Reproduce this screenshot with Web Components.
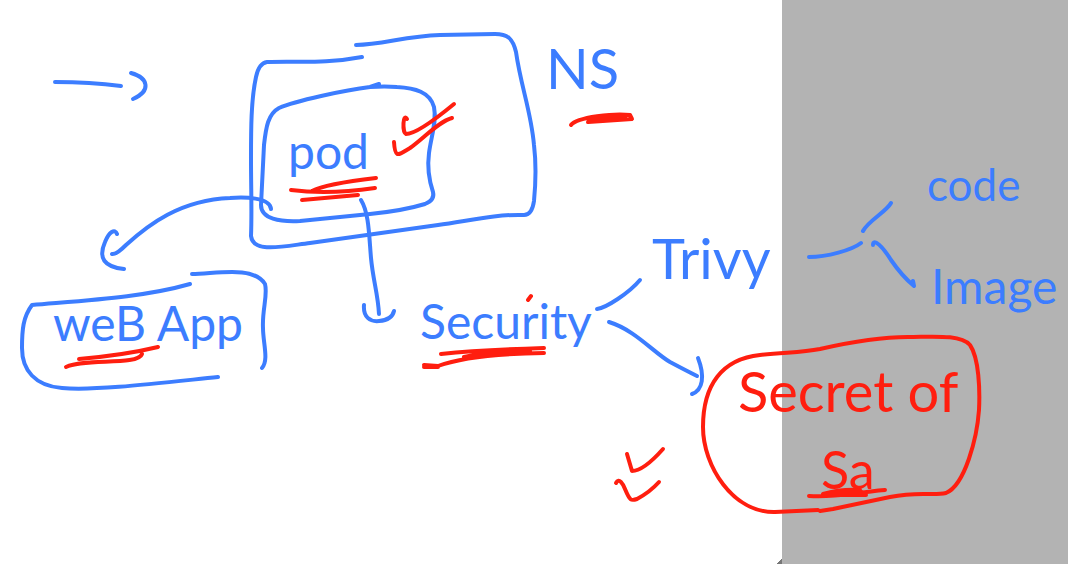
<!DOCTYPE html>
<html lang="en">
<head>
<meta charset="utf-8">
<title>Pod security whiteboard</title>
<style>
  html, body { margin: 0; height: 100%; }
  body { font-family: Lato, "Open Sans", sans-serif; }
</style>
</head>
<body>
<ink-board>
  <ink-strokes slot="ink"></ink-strokes>
  <ink-label style="left:288px;top:127px" size="48">pod</ink-label>
  <ink-label style="left:546px;top:40px" size="56">NS</ink-label>
  <ink-label style="left:53px;top:299px" size="48">weB App</ink-label>
  <ink-label style="left:420px;top:297px" size="48">Security</ink-label>
  <ink-label style="left:652px;top:230px" size="56">Trivy</ink-label>
  <ink-label style="left:927px;top:162px" size="44">code</ink-label>
  <ink-label style="left:931px;top:262px" size="48">Image</ink-label>
  <ink-label style="left:738px;top:363px" size="56" tone="red">Secret of</ink-label>
  <ink-label style="left:821px;top:443px" size="52" tone="red">Sa</ink-label>
</ink-board>

<script>
class InkBoard extends HTMLElement {
  constructor() {
    super();
    this.attachShadow({ mode: "open" }).innerHTML = `
      <style>
        :host { --blue: #3c7dff; --red: #ff1e0f; position: relative; display: flex; min-height: 100%; overflow: hidden; background: #fff; }
        .page { flex: 0 0 782px; display: flex; align-items: flex-end; justify-content: flex-end; }
        .fold { width: 5px; height: 5px; background: linear-gradient(135deg, #fff 50%, #777 50%); }
        .outside { flex: 1; background: #b3b3b3; }
      </style>
      <div class="page"><span class="fold"></span></div>
      <div class="outside"></div>
      <slot name="ink"></slot>
      <slot></slot>`;
  }
}

class InkLabel extends HTMLElement {
  constructor() {
    super();
    this.attachShadow({ mode: "open" }).innerHTML = `
      <style>
        :host { position: absolute; white-space: nowrap; line-height: 1; color: var(--blue); }
        :host([tone="red"]) { color: var(--red); }
        :host([size="44"]) { font-size: 44px; }
        :host([size="48"]) { font-size: 48px; }
        :host([size="52"]) { font-size: 52px; }
        :host([size="56"]) { font-size: 56px; }
      </style>
      <slot></slot>`;
  }
}

class InkStrokes extends HTMLElement {
  constructor() {
    super();
    this.attachShadow({ mode: "open" }).innerHTML = `
      <style>
        :host { position: absolute; left: 0; top: 0; }
        svg { display: block; fill: none; stroke-width: 4; stroke-linecap: round; stroke-linejoin: round; }
        .blue { stroke: var(--blue); }
        .red { stroke: var(--red); }
      </style>
      <svg width="1068" height="564" viewBox="0 0 1068 564" aria-hidden="true">
        <g class="blue">
          <!-- loose arrow -->
          <path d="M55 82Q90 82 121 86M131 73C149 78 151 91 133 99"/>
          <!-- namespace frame -->
          <path d="M356 45C382 45 405 36 440 35L495 34C508 34 513 39 516 52C521 87 531 111 534 145Q537 170 534 201Q532 215 524 215C495 214 468 221 438 225L310 243C285 246 253 254 251 236C252 212 251 190 251 158C251 130 251 100 256 77Q259 63 267 62C300 61 325 64 362 57"/>
          <!-- pod frame -->
          <path d="M379 84L370 87C345 90 295 101 279 108C268 114 266 127 264 145L261 205C261 219 280 222 300 221L370 214C390 212 412 208 425 204Q435 200 433 192C429 180 427 168 429 153C431 137 437 121 434 107C430 92 415 88 397 87Q385 86 370 87"/>
          <!-- pod to web app -->
          <path d="M271 209C270 197 244 197 230 198C180 200 148 225 126 245Q116 255 112 254M117 234C115 228 109 232 105 242C98 258 104 267 124 269"/>
          <!-- web app frame -->
          <path d="M190 284C145 297 90 300 32 305C23 317 22 330 22 348C22 370 35 386 62 388C95 391 160 383 218 377M192 274C215 274 253 265 265 284C268 295 262 310 263 328C263 343 269 360 262 368"/>
          <!-- pod to security -->
          <path d="M361 200C369 213 369 235 371 258C373 280 378 294 379 314M364 305C363 317 370 322 379 321Q392 320 394 311"/>
          <!-- security branches -->
          <path d="M597 309C606 308 629 293 640 280M609 322C635 330 653 352 670 362Q685 370 697 376M698 358C705 376 703 390 692 394"/>
          <!-- trivy branches -->
          <path d="M809 257C827 257 852 250 861 243M863 231C868 221 886 212 891 203M873 245C873 237 883 247 891 260Q902 276 914 286L913 281"/>
        </g>
        <g class="red">
          <!-- ticks by the pod -->
          <path d="M407 119C403 112 402 132 406 134C416 134 437 118 454 104M394 142C395 159 398 155 410 148C424 138 438 122 452 118"/>
          <!-- pod underline -->
          <path d="M291 190Q328 195 375 188M312 191Q325 184 376 178M302 200L358 195"/>
          <!-- NS underline -->
          <path d="M571 125C577 117 615 113 630 115L632 119L588 122L625 117M590 119L620 118"/>
          <!-- web app underline -->
          <path d="M66 367C85 358 138 366 142 354M79 359Q125 355 158 347"/>
          <!-- security underline and accent -->
          <path d="M424 365L438 366Q470 354 544 353M441 354Q480 350 544 348M464 357Q490 351 530 351M424 367L438 367M528 300L531 296"/>
          <!-- secret loop -->
          <path d="M818 510L775 512C733 513 703 466 703 427C703 385 722 359 760 355C785 352 800 353 820 349C855 341 880 337 908 337C932 337 960 334 970 345C979 358 980 390 979 410C977 438 965 485 946 493C932 496 920 491 890 497L833 509L820 511"/>
          <!-- Sa underline -->
          <path d="M809 496C835 498 850 493 885 490M823 494Q840 489 860 490L827 495L866 495M830 493L862 492"/>
          <!-- lower ticks -->
          <path d="M627 454L632 471C642 471 655 458 663 449M616 483C619 477 623 484 625 489C630 501 631 501 637 499Q650 492 659 482"/>
        </g>
      </svg>`;
  }
}

customElements.define("ink-board", InkBoard);
customElements.define("ink-label", InkLabel);
customElements.define("ink-strokes", InkStrokes);
</script>
</body>
</html>
